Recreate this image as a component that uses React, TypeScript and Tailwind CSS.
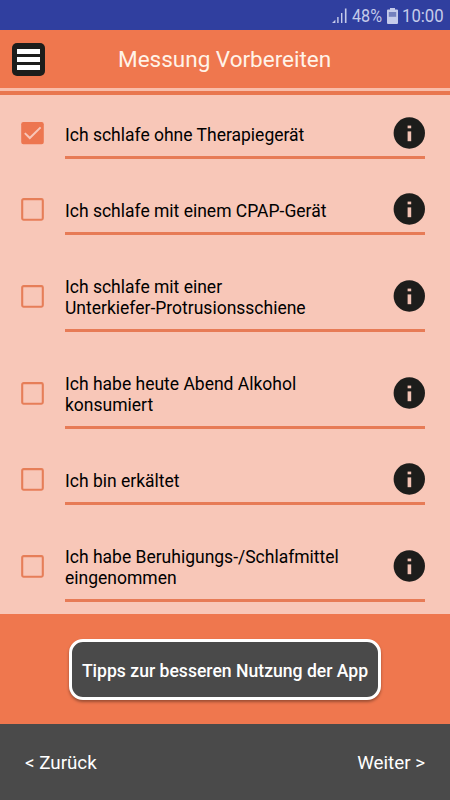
import clsx from "clsx";

const options = [
  { lines: ["Ich schlafe ohne Therapiegerät"], checked: true },
  { lines: ["Ich schlafe mit einem CPAP-Gerät"], checked: false },
  { lines: ["Ich schlafe mit einer", "Unterkiefer-Protrusionsschiene"], checked: false },
  { lines: ["Ich habe heute Abend Alkohol", "konsumiert"], checked: false },
  { lines: ["Ich bin erkältet"], checked: false },
  { lines: ["Ich habe Beruhigungs-/Schlafmittel", "eingenommen"], checked: false },
];

const SignalIcon = () => (
  <svg width="17" height="17" viewBox="0 0 17 17" fill="#c5cbea">
    <path d="M0 16L3.4 12.8V16Z" />
    <rect x="5.2" y="10" width="1.4" height="6" />
    <rect x="9" y="6" width="1.4" height="10" />
    <rect x="12.9" y="1.5" width="1.6" height="14.5" />
  </svg>
);

const BatteryIcon = () => (
  <svg width="11" height="16" viewBox="0 0 11 16">
    <path d="M3 0H8V1.5H10Q11 1.5 11 2.5V15Q11 16 10 16H1Q0 16 0 15V2.5Q0 1.5 1 1.5H3Z" fill="#c5cbea" />
    <rect x="1.8" y="4" width="7.4" height="4.8" fill="#7480bd" />
  </svg>
);

const InfoIcon = () => (
  <svg className="shrink-0" width="32" height="32" viewBox="0 0 32 32">
    <circle cx="16.3" cy="16" r="15.7" fill="#1d1d1b" />
    <rect x="14.6" y="8.6" width="3.6" height="2.7" fill="#f3c3b4" />
    <rect x="14.6" y="14.4" width="3.6" height="9.8" fill="#f3c3b4" />
  </svg>
);

const Checkbox = ({ checked }: { checked: boolean }) => (
  <svg className="shrink-0" width="24" height="24" viewBox="0 0 24 24">
    {checked ? (
      <>
        <rect x="1.2" y="1" width="22.6" height="22.2" rx="2.2" fill="#ed7650" />
        <path d="M4.8 12.1L9.8 17L20.6 6.4" fill="none" stroke="#f8c7b8" strokeWidth="2" />
      </>
    ) : (
      <rect x="2.2" y="2.1" width="20.6" height="20.6" rx="1.4" fill="none" stroke="#e67e58" strokeWidth="2.1" />
    )}
  </svg>
);

const OptionRow = ({ lines, checked }: { lines: string[]; checked: boolean }) => (
  <div className={clsx("flex items-center pl-5 pr-[25px]", lines.length > 1 ? "h-[73px]" : "h-[52px]")}>
    <Checkbox checked={checked} />
    <div className="ml-[21px] flex h-full flex-1 items-center justify-between border-b-3 border-[#e77b56] pt-[3px]">
      <p className="pt-[4px] text-[17.5px] leading-[21px] whitespace-nowrap text-black">
        {lines.map((line) => (
          <span key={line} className="block">
            {line}
          </span>
        ))}
      </p>
      <InfoIcon />
    </div>
  </div>
);

const App = () => {
  return (
    <div className="flex h-[800px] w-[450px] flex-col overflow-hidden bg-[#f8c7b8] font-['Roboto',sans-serif]">
      <div className="flex h-[30px] shrink-0 items-center justify-end bg-[#303f9f] pr-[7px] text-[18.6px] text-[#c5cbea]">
        <SignalIcon />
        <span className="ml-[3px] w-[31px] origin-left scale-x-[0.87] pt-[4px] whitespace-nowrap">48%</span>
        <span className="ml-[4px] pt-[2px]">
          <BatteryIcon />
        </span>
        <span className="ml-[4px] w-[41px] origin-left scale-x-[0.9] pt-[4px] whitespace-nowrap">10:00</span>
      </div>

      <header className="flex h-[58px] shrink-0 items-center bg-[#ef774e]">
        <button className="ml-[12px] flex h-[33px] w-[33px] flex-col items-center justify-center gap-[3px] rounded-[5px] bg-[#1d1d1b]">
          <span className="h-[5px] w-[23px] bg-white" />
          <span className="h-[5px] w-[23px] bg-white" />
          <span className="h-[5px] w-[23px] bg-white" />
        </button>
        <h1 className="ml-[73px] pt-[2px] text-[22.5px] whitespace-nowrap text-[#fff3e8]">Messung Vorbereiten</h1>
      </header>
      <div className="h-[7px] shrink-0 border-t-3 border-[#f9bda9] bg-[#e9774f]" />

      <main className="flex h-[519px] shrink-0 flex-col gap-6 pt-3">
        {options.map((option) => (
          <OptionRow key={option.lines[0]} {...option} />
        ))}
      </main>

      <div className="flex h-[110px] shrink-0 items-center justify-center bg-[#ef774e]">
        <button className="h-[61px] w-[312px] rounded-[14px] border-3 border-white bg-[#4a4a4a] pt-[4px] text-[17.6px] font-medium whitespace-nowrap text-white shadow-[0_2px_3px_rgba(0,0,0,0.35)]">
          Tipps zur besseren Nutzung der App
        </button>
      </div>

      <footer className="flex h-[76px] shrink-0 items-center justify-between bg-[#4a4a4a] px-[25px] pt-[3px] text-[18.8px] text-white">
        <button>&lt; Zurück</button>
        <button>Weiter &gt;</button>
      </footer>
    </div>
  );
};

export default App;
